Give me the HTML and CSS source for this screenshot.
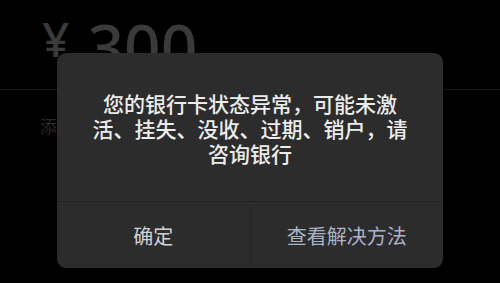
FILE: index.html
```html
<!DOCTYPE html>
<html lang="zh-CN">
<head>
<meta charset="utf-8">
<link rel="stylesheet" href="styles.css">
</head>
<body>
<div class="page">
  <div class="amount"><span class="yen">¥</span><span class="num">300</span></div>
  <div class="rule"></div>
  <div class="note">添</div>
</div>
<div class="dialog">
  <div class="message">
    <p>您的银行卡状态异常，可能未激活、挂失、没收、过期、销户，请咨询银行</p>
  </div>
  <div class="actions">
    <div class="btn ok">确定</div>
    <div class="sep"></div>
    <div class="btn link">查看解决方法</div>
  </div>
</div>
</body>
</html>
```
FILE: styles.css
```css
html, body {
  margin: 0;
  padding: 0;
  background: #000;
  width: 500px;
  height: 283px;
  overflow: hidden;
  font-family: "Noto Sans CJK SC", "Noto Sans", sans-serif;
}
.page {
  padding: 12px 0 0 42px;
}
.amount {
  display: flex;
  align-items: flex-start;
  color: #3a3a3a;
  font-family: "Noto Sans", sans-serif;
  font-weight: 500;
  height: 70px;
}
.yen {
  font-size: 48px;
  line-height: 48px;
  margin-top: 3px;
}
.num {
  font-size: 64px;
  line-height: 64px;
  margin-left: 18px;
  margin-top: 3px;
}
.rule {
  height: 1px;
  background: #161616;
  margin-left: -42px;
  margin-top: 7px;
}
.note {
  margin-top: 26px;
  margin-left: -2px;
  width: 17px;
  color: #2a2a2a;
  font-size: 17px;
  line-height: 20px;
}
.dialog {
  position: absolute;
  left: 57px;
  top: 53px;
  width: 386px;
  height: 215px;
  background: #2c2c2c;
  border-radius: 9px;
  display: flex;
  flex-direction: column;
}
.message {
  height: 148px;
  display: flex;
  align-items: center;
  justify-content: center;
  border-bottom: 1px solid #242424;
  padding: 0 30px;
}
.message p {
  margin: 0;
  padding-top: 2px;
  text-align: center;
  color: #ececec;
  font-size: 21px;
  font-weight: 500;
  line-height: 25px;
}
.actions {
  flex: 1;
  display: flex;
  align-items: stretch;
}
.btn {
  flex: 1;
  display: flex;
  align-items: center;
  justify-content: center;
  font-size: 20px;
}
.ok {
  color: #d2d2d2;
}
.link {
  color: #a9b3c8;
}
.sep {
  width: 1px;
  background: #242424;
  margin: 5px 0 4px;
}
```
